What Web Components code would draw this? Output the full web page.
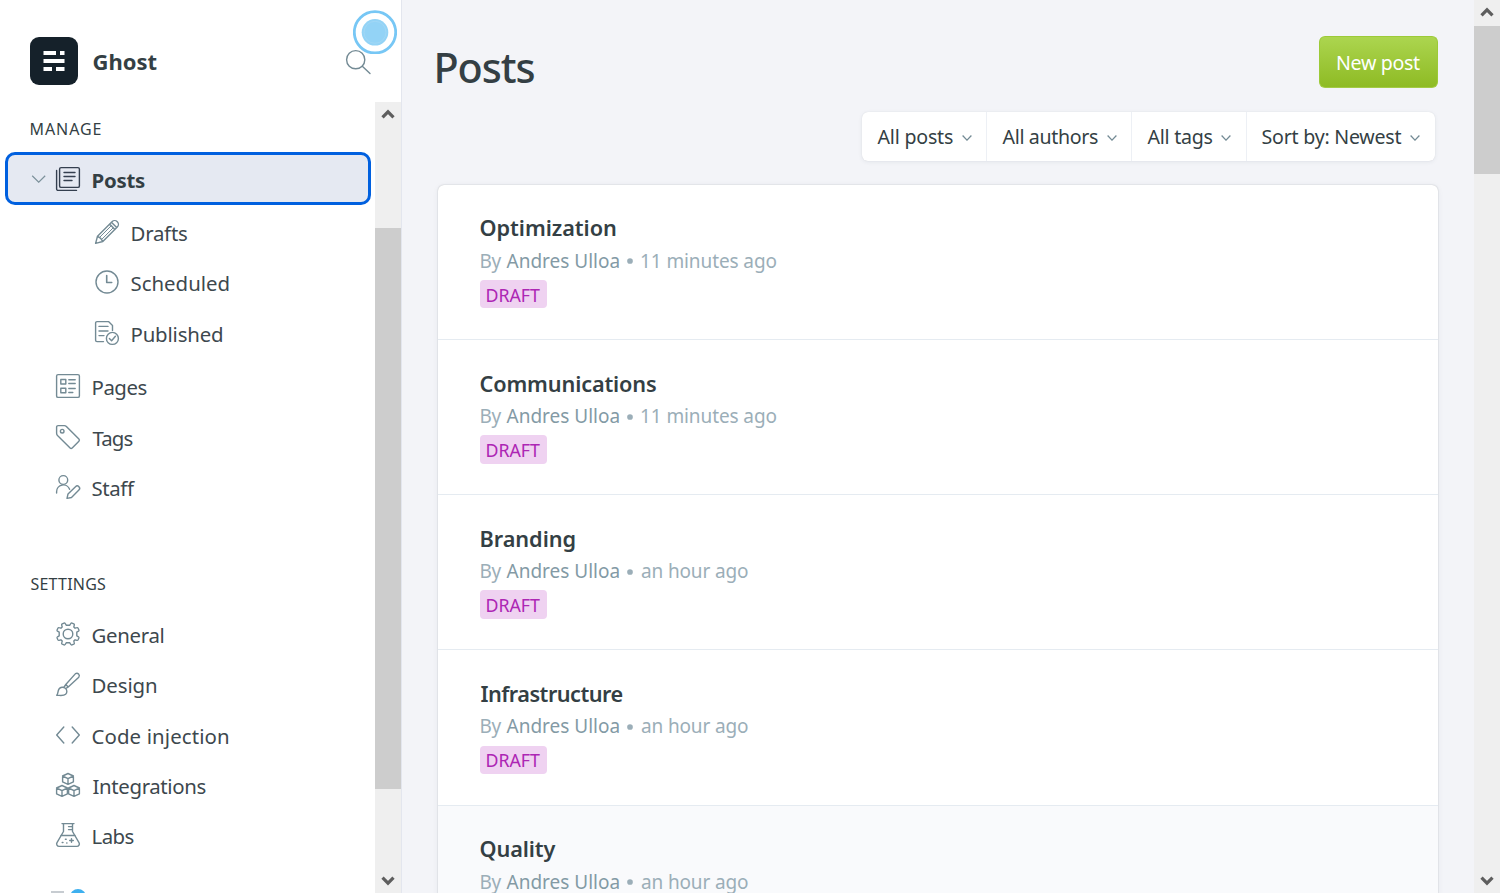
<!DOCTYPE html>
<html lang="en">
<head>
<meta charset="utf-8">
<title>Posts - Ghost</title>
<style>
html,body{margin:0;height:100%;overflow:hidden}
body{font-family:"Noto Sans","Open Sans",sans-serif;color:#343f44;background:#f3f4f8}
</style>
</head>
<body>
<ghost-app></ghost-app>
<script>
const ctx = document.createElement('canvas').getContext('2d');
const define = (name, html, init) => customElements.define(name, class extends HTMLElement {
  connectedCallback() {
    if (this.shadowRoot) return;
    const t = document.createElement('template');
    t.innerHTML = typeof html === 'function' ? html(this) : html;
    this.attachShadow({mode: 'open'}).append(t.content.cloneNode(true));
    if (init) init(this);
  }
});

/* Tracked label: spreads its letters over a set width, starting at the left edge of its box. */
define('fit-text', `<style>:host{display:block;white-space:pre;flex:none}</style><slot></slot>`, el => {
  const s = getComputedStyle(el), text = el.textContent, w = +el.getAttribute('w');
  ctx.font = `${s.fontWeight} ${s.fontSize} ${s.fontFamily}`;
  const m = ctx.measureText(text);
  const ink = m.actualBoundingBoxLeft + m.actualBoundingBoxRight;
  el.style.letterSpacing = ((w - ink) / (text.length - 1)).toFixed(3) + 'px';
  el.style.width = w + 'px';
  el.style.textIndent = (m.actualBoundingBoxLeft + .5).toFixed(2) + 'px';
});

const ICONS = {
  posts: '<rect x="3.6" y=".6" width="19.8" height="19.8" rx="1.5"/><path d="M.6 3.5v18.400a1.500 1.500 0 0 0 1.500 1.500h18.400M8 5.500h11M8 9.500h11M8 13.500h8"/>',
  drafts: '<path d="M.6 23.400l1.900-7.200L17 1.700a3.700 3.700 0 0 1 5.300 5.300L7.800 21.500zM2.500 16.200l3.200 2.200 2.100 3.100M14.600 4.100l5.300 5.300M16.400 2.300l5.300 5.300"/><path stroke-width="1" d="M5 17L16 6M7.100 19L18 8"/>',
  scheduled: '<circle cx="12" cy="12" r="11"/><path stroke-width="1.600" d="M11.700 5.500v7h5"/>',
  published: '<path d="M8.500 20.600H2a1.400 1.400 0 0 1-1.400-1.400V2A1.400 1.400 0 0 1 2 .6h11.500l4 4v4.800M4 5.400h9M4 10h9M4 14.600h5"/><circle cx="17.400" cy="17.400" r="6"/><path d="M14.400 17.600l2.200 2.200 3.800-4.600"/>',
  pages: '<rect x=".6" y=".6" width="22.800" height="22.800" rx="1.500"/><path d="M4.800 5.500h5v4.500h-5zM4.800 14.300h5v4.500h-5zM12.800 5.700h6.400M12.800 9.500h6.400M12.800 14.500h6.400M12.800 18.500h4"/>',
  tags: '<path d="M.6 2.100A1.500 1.500 0 0 1 2.100.6h6.200a3 3 0 0 1 2.100.9l12.500 12.600a1.500 1.500 0 0 1 0 2.100l-6.700 6.700a1.500 1.500 0 0 1-2.100 0L1.500 10.400a3 3 0 0 1-.9-2.100z"/><circle cx="6.200" cy="6.200" r="1.800"/>',
  staff: '<circle cx="7.300" cy="5" r="4.400"/><path d="M.6 18v-1.300a6.700 6.700 0 0 1 13-2.400M11 23.400l1-4.400 7.500-7.300a2.400 2.400 0 0 1 3.400 3.400L15.500 22.500z"/>',
  general: '<circle cx="12" cy="12" r="4.800"/><path d="M10.200 3.200l-1-1.700A1 1 0 0 0 8 1.100L6.200 1.900a1 1 0 0 0-.5 1.200l.5 1.800-1.300 1.300-1.800-.5a1 1 0 0 0-1.200.5L1.100 8a1 1 0 0 0 .4 1.200l1.700 1v3.600l-1.700 1A1 1 0 0 0 1.100 16l.8 1.800a1 1 0 0 0 1.200.5l1.800-.5 1.300 1.300-.5 1.800a1 1 0 0 0 .5 1.200l1.800.8a1 1 0 0 0 1.200-.4l1-1.700h3.600l1 1.700a1 1 0 0 0 1.200.4l1.800-.8a1 1 0 0 0 .5-1.200l-.5-1.800 1.300-1.300 1.800.5a1 1 0 0 0 1.200-.5l.8-1.800a1 1 0 0 0-.4-1.200l-1.700-1v-3.600l1.700-1a1 1 0 0 0 .4-1.200l-.8-1.800a1 1 0 0 0-1.200-.5l-1.800.5-1.300-1.300.5-1.800a1 1 0 0 0-.5-1.200L16 1.100a1 1 0 0 0-1.200.4l-1 1.700z"/>',
  design: '<path d="M.7 23.300c1.700-1.400.8-4.200 2.300-6.300a4.400 4.400 0 0 1 6.300-.7c2 1.500 2 4.300.3 6C7.600 24.200 4 23.300.7 23.300zM7.800 15.500l2-3L19.500 1.600a2.500 2.500 0 0 1 3.300 3.600L12.200 15l-2.600 1.700M9.800 12.500l2.400 2.500"/>',
  code: '<path d="M7.800 4L.7 12l7.100 8M16.200 4l7.100 8-7.100 8"/>',
  integrations: '<path d="M12 .5l5.400 2.500v5.800L12 11.300 6.600 8.800V3zM6.600 3L12 5.700 17.400 3M12 5.700v5.600M6 12.500l5.400 2.500v5.800L6 23.300.6 20.800V15zM.6 15L6 17.700l5.400-2.700M6 17.700v5.600M18 12.500l5.400 2.500v5.800L18 23.300l-5.400-2.500V15zM12.600 15l5.400 2.700 5.400-2.700M18 17.700v5.600"/>',
  labs: '<path d="M6 .6h12M7.500.6v7.900L1 19.600a2.500 2.500 0 0 0 2.200 3.800h17.600a2.500 2.500 0 0 0 2.200-3.800L16.500 8.500V.6M4.800 12.500h14.400M12.500 3.600h4M12.500 6.600h4M15.500 15.700v3.600M13.700 17.500h3.600"/><path stroke-width="1.600" d="M6.300 19.500h.6M9.500 16.200h.6M10.800 20h.1"/>',
  search: '<circle cx="9.700" cy="9.700" r="9.100"/><path d="M16.300 16.300L24 23.600"/>'
};
define('line-icon', el => `<style>:host{display:block;width:24px;height:24px;flex:none;color:#738a94}svg{display:block;overflow:visible}</style>
<svg width="24" height="24" viewBox="0 0 24 24" fill="none" stroke="currentColor" stroke-width="1.400" stroke-linecap="round" stroke-linejoin="round">${ICONS[el.getAttribute('name')]}</svg>`);

define('side-heading', `<style>:host{display:flex;align-items:center;padding-left:30px;font-size:16px;font-weight:400}</style><slot></slot>`);

define('side-item', el => `<style>
:host{display:flex;align-items:center;height:50.300px;padding-left:56px;font-size:20.400px;color:#3d484e}
:host([sub]){padding-left:95px}
:host([active]){box-sizing:border-box;height:53px;width:366px;margin:0 0 1.800px 5px;padding-left:23px;border:3px solid #0060df;border-radius:10px;background:#e5e9f2;font-weight:700;color:#343f44}
:host([active]) line-icon{color:#343f4f;margin-right:12px}
line-icon{margin-right:12px}
fit-text{margin-top:2px}
.chev{width:15px;height:8px;margin-right:10px;flex:none}
</style>${el.hasAttribute('active') ? '<svg class="chev" viewBox="0 0 15 8" fill="none" stroke="#7c919b" stroke-width="1.200"><path d="M1.200.8L7.700 7.200 14.200.8"/></svg>' : ''}
<line-icon name="${el.getAttribute('icon')}"></line-icon><fit-text w="${el.getAttribute('w')}">${el.textContent}</fit-text>`);

define('scroll-bar', `<style>
:host{display:flex;flex-direction:column;width:26px;background:#efefef;flex:none}
svg{display:block;width:26px;height:26px;flex:none}
.thumb{background:#cdcdcd;height:var(--thumb);margin-top:var(--at)}
.gap{flex:1}
path{fill:none;stroke:#5e5e5e;stroke-width:3.200}
</style><svg viewBox="0 0 26 26"><path d="M7.500 15.300L13 9.800l5.500 5.500"/></svg><div class="thumb"></div><div class="gap"></div><svg viewBox="0 0 26 26"><path d="M7.500 10.700L13 16.200l5.500-5.500"/></svg>`);

define('side-bar', `<style>
:host{display:flex;flex-direction:column;width:401px;height:893px;background:#fff;border-right:1px solid #e3e6ee;position:relative;flex:none}
header{display:flex;align-items:center;height:102px;box-sizing:border-box;padding:0 31px 0 30px}
.logo{width:48px;height:48px;display:block;margin:20px 15px 0 0}
.name{font-size:22px;font-weight:700;margin-top:19px}
header line-icon{margin:22px 0 0 auto}
.scroll{display:flex;flex:1;min-height:0}
nav{width:375px;overflow:hidden;flex:none}
.manage{height:50px;padding-top:4px;box-sizing:border-box}
.pages{height:3.400px}
.settings{height:96.800px;box-sizing:border-box;padding-top:47.500px}
.user{display:flex;align-items:flex-start;padding:28.600px 0 0 51px}
.user i{width:13px;height:12px;background:#c7ccd1;margin-top:2.500px}
.user b{width:16px;height:16px;border-radius:50%;background:#3eb0ef;margin:0 0 0 6px}
scroll-bar{--thumb:561px;--at:100px}
.beacon{position:absolute;left:353px;top:10px;width:44px;height:44px}
</style>
<header>
<svg class="logo" viewBox="0 0 48 48"><rect width="48" height="48" rx="9" fill="#15212a"/><path fill="#fff" d="M13.500 14h12.500v4H13.500zM30 14h4.500v4H30zM13.500 22h21v4h-21zM13.500 30h8.500v4h-8.500zM26 30h8.500v4H26z"/></svg>
<fit-text class="name" w="63">Ghost</fit-text><line-icon name="search"></line-icon>
</header>
<div class="scroll"><nav>
<side-heading class="manage"><fit-text w="70">MANAGE</fit-text></side-heading>
<side-item active icon="posts" w="52.500">Posts</side-item>
<side-item sub icon="drafts" w="55.500">Drafts</side-item>
<side-item sub icon="scheduled" w="97">Scheduled</side-item>
<side-item sub icon="published" w="90.500">Published</side-item>
<div class="pages"></div>
<side-item icon="pages" w="54">Pages</side-item>
<side-item icon="tags" w="40">Tags</side-item>
<side-item icon="staff" w="42.500">Staff</side-item>
<side-heading class="settings"><fit-text w="75.500">SETTINGS</fit-text></side-heading>
<side-item icon="general" w="71">General</side-item>
<side-item icon="design" w="63.500">Design</side-item>
<side-item icon="code" w="135.500">Code injection</side-item>
<side-item icon="integrations" w="113">Integrations</side-item>
<side-item icon="labs" w="41">Labs</side-item>
<div class="user"><i></i><b></b></div>
</nav><scroll-bar></scroll-bar></div>
<svg class="beacon" viewBox="0 0 44 44"><circle cx="22" cy="22.300" r="20.700" fill="none" stroke="#77c7f5" stroke-width="2.800"/><circle cx="22" cy="22.300" r="13.300" fill="#93d3f6"/><circle cx="22" cy="22.300" r="11" fill="none" stroke="#a5d8f5" stroke-width=".8"/></svg>`);

define('filter-menu', el => `<style>
:host{display:flex;align-items:center;box-sizing:border-box;height:49px;padding-left:15px;font-size:19.600px;border-right:1px solid #edf0f5}
:host(:last-of-type){border-right:0}
fit-text{margin-top:0}
svg{width:10px;height:6px;margin:3px 0 0 9px}
</style><fit-text w="${el.getAttribute('w')}">${el.textContent}</fit-text><svg viewBox="0 0 10 6" fill="none" stroke="#738a94" stroke-width="1.300"><path d="M.6.5L5 5.100 9.400.5"/></svg>`);

define('post-row', el => `<style>
:host{display:block;box-sizing:border-box;height:155.100px;padding:27.500px 42px 0;border-bottom:1px solid #e5ebf1}
:host(:nth-child(4)){height:155.700px}
:host([hover]){background:#f9fafc}
.title{font-size:21.700px;font-weight:600;line-height:32px;color:#343f44}
:host(:first-child) .title{margin:-.8px 0 .8px}
.meta{display:flex;font-size:19px;line-height:32px;color:#9baeb8;margin-top:.5px}
.who{color:#839aa5;margin-left:5px}
.dot{width:6px;height:6px;border-radius:50%;background:#9baeb8;margin:13.500px 7.500px 0 8px;transform:scale(.95)}
.tag{display:inline-flex;align-items:center;box-sizing:border-box;width:67px;height:28.500px;border-radius:4px;background:#efd2f1;color:#ad26b4;font-size:17.800px;padding-left:6px;margin-top:3.300px}
.tag fit-text{line-height:28px;margin-top:1px}
</style>
<fit-text class="title" w="${el.getAttribute('tw')}">${el.getAttribute('name')}</fit-text>
<div class="meta"><fit-text w="21">By</fit-text><fit-text class="who" w="113">Andres Ulloa</fit-text><span class="dot"></span><fit-text w="${el.getAttribute('aw')}">${el.getAttribute('ago')}</fit-text></div>
<div class="tag"><fit-text w="53.500">DRAFT</fit-text></div>`);

define('posts-screen', `<style>
:host{display:flex;flex-direction:column;flex:1;height:893px;box-sizing:border-box;padding:36px 36px 0 36px;overflow:hidden}
.top{display:flex;justify-content:space-between;align-items:flex-start;height:76px;flex:none}
h1{margin:.6px 0 0 -2px;font-size:41.300px;font-weight:500;line-height:60px;color:#343f44}
.new{display:flex;align-items:center;box-sizing:border-box;width:119px;height:52px;padding-left:16.500px;border-radius:6px;background:linear-gradient(#acd54f,#8ebb24);border:1px solid #9cca38;border-bottom-color:#a3cb45;color:#fff;font-size:19.600px}
.new fit-text{margin-top:1.500px}
.filters{display:flex;flex:none;align-self:flex-end;margin-right:3px;background:#fff;border-radius:6px;box-shadow:0 0 1px rgba(0,0,0,.12),0 1px 4px rgba(40,60,90,.08)}
.list{width:1000px;flex:none;margin:24px 0 0;background:#fff;border-radius:6px;box-shadow:0 0 1.500px rgba(0,0,0,.25),0 1px 6px rgba(40,60,90,.06)}
</style>
<div class="top"><h1><fit-text w="98">Posts</fit-text></h1><div class="new"><fit-text w="83">New post</fit-text></div></div>
<div class="filters">
<filter-menu style="width:125px" w="75.500">All posts</filter-menu>
<filter-menu style="width:145px" w="95.500">All authors</filter-menu>
<filter-menu style="width:115px" w="65">All tags</filter-menu>
<filter-menu style="width:188px" w="139">Sort by: Newest</filter-menu>
</div>
<div class="list">
<post-row name="Optimization" tw="135.500" ago="11 minutes ago" aw="135.500"></post-row>
<post-row name="Communications" tw="175.500" ago="11 minutes ago" aw="135.500"></post-row>
<post-row name="Branding" tw="94" ago="an hour ago" aw="107"></post-row>
<post-row name="Infrastructure" tw="142" ago="an hour ago" aw="107"></post-row>
<post-row hover name="Quality" tw="75" ago="an hour ago" aw="107"></post-row>
</div>`);

define('ghost-app', `<style>
:host{display:flex;width:1500px;height:893px;overflow:hidden}
.page{--thumb:148px;--at:0px;height:893px}
</style><side-bar></side-bar><posts-screen></posts-screen><scroll-bar class="page"></scroll-bar>`);
</script>
</body>
</html>
